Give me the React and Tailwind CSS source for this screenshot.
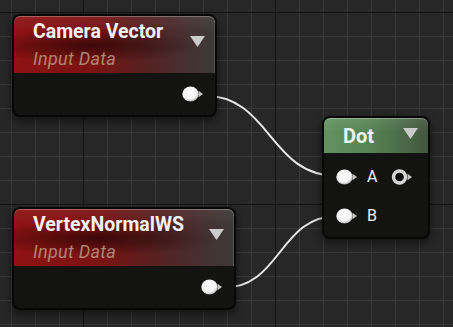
import React from "react";

function Pin({ ring = false }) {
  return (
    <svg width="22" height="16" viewBox="0 0 22 16" className="block">
      <defs>
        <radialGradient id="pg" cx="45%" cy="40%" r="60%">
          <stop offset="0%" stopColor="#ffffff" />
          <stop offset="75%" stopColor="#f2f2f2" />
          <stop offset="100%" stopColor="#a8a8a8" />
        </radialGradient>
      </defs>
      {ring ? (
        <circle cx="8.5" cy="8" r="6" fill="#0a0a0a" stroke="#d6d6d6" strokeWidth="3.4" />
      ) : (
        <ellipse cx="8.5" cy="8" rx="8.2" ry="7.6" fill="url(#pg)" />
      )}
      <polygon points="16.5,4.8 21,8 16.5,11.2" fill="#c4c4c4" />
    </svg>
  );
}

function Triangle() {
  return (
    <svg width="15" height="11" viewBox="0 0 15 11" className="block">
      <polygon points="0,0 15,0 7.5,11" fill="#cbcbcb" />
    </svg>
  );
}

function InputNode({ title, left, top, width }) {
  return (
    <div
      className="absolute rounded-[8px] border-2 border-[#070707] bg-[#131412] shadow-[0_4px_10px_rgba(0,0,0,0.55)]"
      style={{ left, top, width }}
    >
      <div className="relative h-[57px] rounded-t-[6px] bg-[linear-gradient(to_bottom,rgba(255,255,255,0.06),transparent_30%),radial-gradient(ellipse_55%_30%_at_38%_52%,rgba(20,0,0,0.6),transparent_100%),linear-gradient(to_right,#8e1212_0%,#7a1313_40%,#552222_66%,#3c3a3a_100%)] shadow-[inset_0_1px_0_rgba(255,255,255,0.28),inset_-1px_0_0_rgba(255,255,255,0.12)] pl-[19px] pt-[5px]">
        <div className="font-['Roboto',sans-serif] text-[19.5px] font-bold leading-[22px] text-[#f2f2f2]">
          {title}
        </div>
        <div className="mt-[6px] font-['Roboto',sans-serif] text-[18px] italic leading-[20px] tracking-[0.3px] text-[#ad8570]">
          Input Data
        </div>
        <div className="absolute right-[10px] top-[20px]">
          <Triangle />
        </div>
      </div>
      <div className="flex h-[42px] items-center justify-end pr-[11px]">
        <Pin />
      </div>
    </div>
  );
}

export default function App() {
  return (
    <div className="relative h-[327px] w-[453px] overflow-hidden bg-[#272727] [background-image:linear-gradient(to_right,#141414_1px,transparent_1px),linear-gradient(to_bottom,#141414_1px,transparent_1px),linear-gradient(to_right,#383838_1px,transparent_1px),linear-gradient(to_bottom,#383838_1px,transparent_1px)] [background-size:192px_192px,192px_192px,24px_24px,24px_24px] [background-position:83px_12px,83px_12px,11px_12px,11px_12px]">
      <svg className="absolute left-0 top-0" width="453" height="327">
        <path d="M203 95.5 C272 95.5 268 176 338 176" fill="none" stroke="#e6e6e6" strokeWidth="2" />
        <path d="M222 288 C282 288 278 216 338 216" fill="none" stroke="#e6e6e6" strokeWidth="2" />
      </svg>

      <InputNode title="Camera Vector" left={12} top={14} width={205} />
      <InputNode title="VertexNormalWS" left={12} top={207} width={224} />

      <div className="absolute left-[322px] top-[116px] w-[108px] rounded-[8px] border-2 border-[#070707] bg-[#131412] shadow-[0_4px_10px_rgba(0,0,0,0.55)]">
        <div className="relative h-[35px] rounded-t-[6px] bg-[linear-gradient(to_bottom,rgba(255,255,255,0.08),transparent_40%),linear-gradient(to_right,#62935f_0%,#568354_45%,#42563e_100%)] shadow-[inset_0_1px_0_rgba(255,255,255,0.3)] pl-[19px] pt-[7px]">
          <div className="font-['Roboto',sans-serif] text-[20px] font-bold leading-[22px] text-[#f2f2f2]">
            Dot
          </div>
          <div className="absolute right-[10px] top-[10px]">
            <Triangle />
          </div>
        </div>
        <div className="flex flex-col gap-[23px] pl-[12px] pr-[15px] pt-[16px] pb-[13px]">
          <div className="flex h-[16px] items-center">
            <Pin />
            <span className="ml-[9px] font-['Roboto',sans-serif] text-[16px] leading-[16px] text-[#f0f0f0]">A</span>
            <div className="flex-1" />
            <Pin ring />
          </div>
          <div className="flex h-[16px] items-center">
            <Pin />
            <span className="ml-[9px] font-['Roboto',sans-serif] text-[16px] leading-[16px] text-[#f0f0f0]">B</span>
          </div>
        </div>
      </div>
    </div>
  );
}
